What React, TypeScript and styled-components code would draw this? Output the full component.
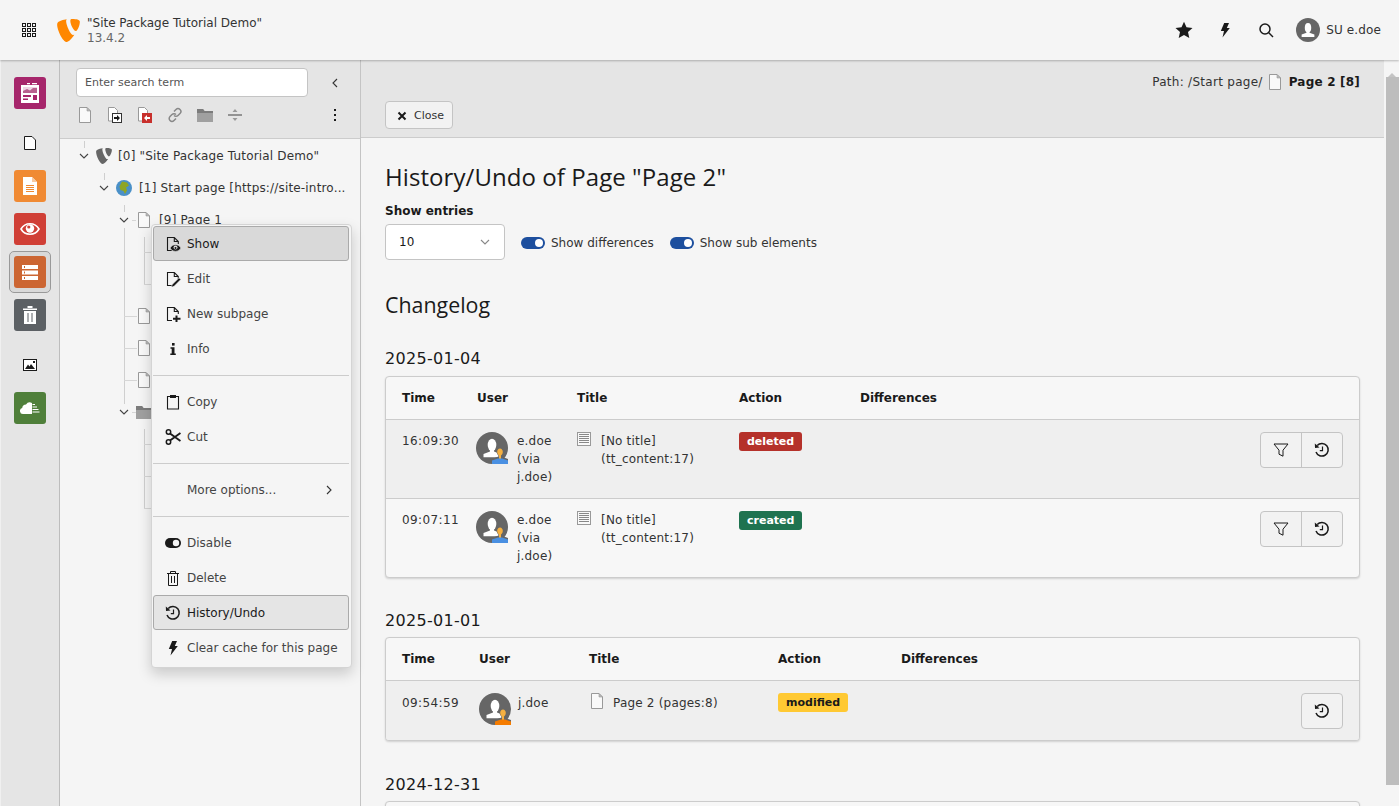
import React from "react";
import styled, { createGlobalStyle } from "styled-components";

const GlobalStyle = createGlobalStyle`
  html, body { margin: 0; padding: 0; height: 100%; overflow: hidden; }
  body { background: #f5f5f5; color: #1a1a1a; font: 12px/18px "DejaVu Sans", Verdana, sans-serif; }
  * { box-sizing: border-box; }
`;

const Page = styled.div`
  height: 806px;
  display: flex;
  flex-direction: column;
  position: relative;
  overflow: hidden;
`;

/* ---------- top bar ---------- */
const TopBar = styled.header`
  height: 60px;
  flex: none;
  display: flex;
  align-items: center;
  background: #f5f5f5;
  box-shadow: 0 1px 2px rgba(0, 0, 0, 0.25);
  position: relative;
  z-index: 3;
`;
const AppGrid = styled.div`
  width: 57px;
  display: flex;
  justify-content: center;
`;
const Logo = styled.div`
  width: 30px;
  height: 23px;
  display: flex;
`;
const SiteName = styled.div`
  font-size: 12px;
  line-height: 15px;
  color: #333;
  margin-top: 1px;
`;
const Version = styled.div`
  color: #666;
`;
const TopActions = styled.div`
  margin-left: auto;
  display: flex;
  align-items: center;
`;
const TopIcon = styled.div`
  width: 41px;
  display: flex;
  justify-content: center;
`;
const UserMenu = styled.div`
  display: flex;
  align-items: center;
  gap: 6px;
  margin: 0 18px 0 10px;
  color: #333;
  letter-spacing: 0.12px;
`;
const UserAvatar = styled.div`
  width: 24px;
  height: 24px;
  display: flex;
`;

const Body = styled.div`
  flex: 1;
  display: flex;
  min-height: 0;
`;

/* ---------- module menu ---------- */
const ModuleNav = styled.nav`
  width: 60px;
  flex: none;
  background: #e5e5e5;
  border-left: 1px solid #f0f0f0;
  border-right: 1px solid #bdbdbd;
  padding-top: 12px;
  display: flex;
  flex-direction: column;
  gap: 7px;
`;
const ModuleGroup = styled.div`
  display: flex;
  flex-direction: column;
`;
const ModuleItem = styled.div<{ $active?: boolean }>`
  width: 42px;
  margin-left: 8px;
  padding-top: ${(p) => (p.$active ? "4px" : "5px")};
  display: flex;
  justify-content: center;
  align-items: flex-start;
  border-radius: 5px;
  border: ${(p) => (p.$active ? "1px solid #999" : "none")};
  height: ${(p) => (p.$active ? "42px" : "43px")};
  margin-bottom: ${(p) => (p.$active ? "1px" : "0")};
  background: ${(p) => (p.$active ? "#d9d9d9" : "transparent")};
`;
const ModuleTile = styled.div<{ $bg: string }>`
  width: 32px;
  height: 32px;
  border-radius: 3px;
  background: ${(p) => p.$bg};
  display: flex;
  align-items: center;
  justify-content: center;
`;
const ModulePlain = styled.div`
  width: 32px;
  height: 32px;
  display: flex;
  align-items: center;
  justify-content: center;
`;

/* ---------- page tree ---------- */
const TreePanel = styled.aside`
  width: 301px;
  flex: none;
  border-right: 1px solid #c4c4c4;
  background: #f5f5f5;
  display: flex;
  flex-direction: column;
`;
const TreeToolbar = styled.div`
  height: 79px;
  flex: none;
  background: #e5e5e5;
  border-bottom: 1px solid #ccc;
  padding: 8px 16px 0;
`;
const SearchRow = styled.div`
  display: flex;
  align-items: center;
`;
const SearchBox = styled.div`
  width: 232px;
  height: 29px;
  background: #fff;
  border: 1px solid #c4c4c4;
  border-radius: 4px;
  padding: 0 8px;
  display: flex;
  align-items: center;
  font-size: 11px;
  color: #555;
`;
const CollapseBtn = styled.div`
  margin-left: 22px;
  display: flex;
`;
const ToolRow = styled.div`
  display: flex;
  align-items: center;
  margin-top: 9px;
  height: 18px;
`;
const ToolIcon = styled.div`
  width: 30px;
  display: flex;
  justify-content: center;
  &:first-child { width: 18px; margin-right: 6px; }
`;
const ToolMore = styled.div`
  margin-left: auto;
  margin-right: 7px;
  display: flex;
`;
const Tree = styled.div`
  flex: 1;
  position: relative;
  padding: 1px 0 0 4px;
`;
const TreeGroup = styled.div<{ $line: number }>`
  position: relative;
  margin-left: 20px;
  &::before {
    content: "";
    position: absolute;
    left: 0;
    top: 1px;
    width: 1px;
    height: ${(p) => p.$line}px;
    background: #cfcfcf;
  }
`;
const TreeRow = styled.div<{ $dash?: number }>`
  height: 32px;
  position: relative;
  display: flex;
  align-items: center;
  color: #333;
  white-space: nowrap;
  &::before {
    content: "";
    position: absolute;
    left: 0;
    top: 16px;
    height: 1px;
    width: ${(p) => p.$dash ?? 12}px;
    background: #d6d6d6;
  }
`;
const Chevron = styled.div`
  width: 16px;
  height: 16px;
  margin-left: -8px;
  margin-right: 4px;
  background: #f5f5f5;
  position: relative;
  display: flex;
  align-items: center;
  justify-content: center;
`;
const RowIcon = styled.div<{ $gap?: number; $left?: number }>`
  width: 16px;
  height: 16px;
  margin-left: ${(p) => p.$left ?? 0}px;
  margin-right: ${(p) => p.$gap ?? 6}px;
  display: flex;
  align-items: center;
  justify-content: center;
  flex: none;
`;
const RowLabel = styled.span`
  display: inline-block;
  letter-spacing: 0.17px;
`;

/* ---------- context menu ---------- */
const ContextMenu = styled.div`
  position: absolute;
  left: 151px;
  top: 224px;
  width: 201px;
  height: 444px;
  background: #f5f5f5;
  border: 1px solid #d4d4d4;
  border-radius: 4px;
  padding: 1px 2px 1px 1px;
  box-shadow: 0 6px 14px rgba(0, 0, 0, 0.18);
  z-index: 5;
`;
const MenuItem = styled.div<{ $state?: "focus" | "current" }>`
  height: 35px;
  display: flex;
  align-items: center;
  gap: 6px;
  border-radius: 3px;
  color: ${(p) => (p.$state ? "#1a1a1a" : "#444")};
  border: 1px solid ${(p) => (p.$state ? "#aaa" : "transparent")};
  padding-left: 11px;
  background: ${(p) => (p.$state === "focus" ? "#d9d9d9" : p.$state === "current" ? "#e5e5e5" : "transparent")};
`;
const MenuIcon = styled.span`
  width: 16px;
  height: 16px;
  flex: none;
  display: flex;
`;
const MenuArrow = styled.span`
  margin-left: auto;
  margin-right: 14px;
  display: flex;
`;
const MenuDivider = styled.div`
  height: 1px;
  background: #ccc;
  margin: 8.5px 0;
`;

/* ---------- content ---------- */
const ContentArea = styled.main`
  flex: 1;
  min-width: 0;
  display: flex;
`;
const ContentColumn = styled.div`
  flex: 1;
  min-width: 0;
  display: flex;
  flex-direction: column;
`;
const DocHeader = styled.div`
  height: 78px;
  flex: none;
  background: #e5e5e5;
  border-bottom: 1px solid #ccc;
  padding: 12px 24px 0;
  display: flex;
  flex-direction: column;
`;
const PathLine = styled.div`
  align-self: flex-end;
  display: flex;
  align-items: center;
  height: 20px;
  color: #333;
  letter-spacing: 0.28px;
`;
const PathIcon = styled.span`
  margin: 0 6px 0 4px;
  display: flex;
`;
const PathPage = styled.strong`
  color: #1a1a1a;
  letter-spacing: 0.2px;
`;
const CloseButton = styled.div`
  margin-top: 9px;
  align-self: flex-start;
  height: 28px;
  width: 68px;
  background: #f2f2f2;
  border: 1px solid #c4c4c4;
  border-radius: 4px;
  display: flex;
  align-items: center;
  padding: 1px 0 0 11px;
  gap: 7px;
  font-size: 11px;
  color: #333;
`;
const ContentBody = styled.div`
  flex: 1;
  min-height: 0;
  overflow: hidden;
  padding: 24px 24px 0;
`;
const PageTitle = styled.h1`
  font: 400 24px/30px "Open Sans", sans-serif;
  letter-spacing: 0.07px;
  color: #1a1a1a;
  margin: 0;
`;
const FieldLabel = styled.div`
  font-weight: 700;
  margin-top: 10px;
  height: 18px;
  line-height: 18px;
`;
const FilterRow = styled.div`
  display: flex;
  align-items: center;
  margin-top: 4px;
`;
const SelectBox = styled.div`
  width: 120px;
  height: 36px;
  background: #fff;
  border: 1px solid #c4c4c4;
  border-radius: 4px;
  padding: 0 14px 0 13px;
  display: flex;
  align-items: center;
  justify-content: space-between;
`;
const ToggleWrap = styled.label`
  display: flex;
  align-items: center;
  gap: 6px;
  margin: 2px 0 0 16px;
  color: #333;
`;
const Toggle = styled.span`
  width: 24px;
  height: 12px;
  border-radius: 6px;
  background: #1d4f9e;
  position: relative;
  &::after {
    content: "";
    position: absolute;
    right: 2px;
    top: 2px;
    width: 8px;
    height: 8px;
    border-radius: 50%;
    background: #fff;
  }
`;
const SectionTitle = styled.h2`
  font: 400 21.4px/26px "Open Sans", sans-serif;
  color: #1a1a1a;
  margin: 32px 0 0;
`;
const DateTitle = styled.h3<{ $top: number; $bottom: number }>`
  font: 400 16px/20px "DejaVu Sans", Verdana, sans-serif;
  letter-spacing: 0.3px;
  color: #1a1a1a;
  margin: ${(p) => p.$top}px 0 ${(p) => p.$bottom}px;
`;
const Panel = styled.div`
  width: 975px;
  min-height: 60px;
  border: 1px solid #ccc;
  border-radius: 4px;
  background: #f7f7f7;
  box-shadow: 0 1px 2px rgba(0, 0, 0, 0.15);
  overflow: hidden;
`;
const Row = styled.div<{ $cols: string; $alt?: boolean; $height: number; $head?: boolean }>`
  display: grid;
  grid-template-columns: ${(p) => p.$cols};
  height: ${(p) => p.$height}px;
  padding: ${(p) => (p.$head ? "0" : "12px")} 16px 0;
  align-items: ${(p) => (p.$head ? "center" : "start")};
  background: ${(p) => (p.$alt ? "#efefef" : "transparent")};
  border-top: ${(p) => (p.$head ? "none" : "1px solid #ccc")};
  color: #333;
  font-weight: ${(p) => (p.$head ? 700 : 400)};
  & > * { color: ${(p) => (p.$head ? "#1a1a1a" : "inherit")}; }
`;
const TimeCell = styled.span<{ $nudge?: number }>`
  letter-spacing: 0.4px;
  padding-top: ${(p) => p.$nudge ?? 0}px;
`;
const UserCell = styled.div<{ $gap: number; $left?: number }>`
  display: flex;
  gap: ${(p) => p.$gap}px;
  margin-left: ${(p) => p.$left ?? -1}px;
`;
const CellText = styled.span<{ $nudge?: number }>`
  letter-spacing: 0.2px;
  padding-top: ${(p) => p.$nudge ?? 0}px;
`;
const Avatar = styled.div`
  width: 32px;
  height: 32px;
  flex: none;
  display: flex;
`;
const TitleCell = styled.div<{ $gap: number }>`
  display: flex;
  gap: ${(p) => p.$gap}px;
`;
const TitleIcon = styled.div`
  width: 16px;
  height: 16px;
  flex: none;
  display: flex;
`;
const Badge = styled.span<{ $bg: string; $fg: string }>`
  display: inline-block;
  height: 19px;
  line-height: 20px;
  border-radius: 3px;
  padding: 0 8px;
  font-size: 11px;
  font-weight: 700;
  background: ${(p) => p.$bg};
  color: ${(p) => p.$fg};
`;
const BtnGroup = styled.div`
  justify-self: end;
  display: flex;
  border: 1px solid #c4c4c4;
  border-radius: 4px;
  background: #f2f2f2;
  height: 36px;
`;
const GroupBtn = styled.div`
  width: 40px;
  display: flex;
  align-items: center;
  justify-content: center;
  & + & { border-left: 1px solid #c4c4c4; width: 41px; }
`;
const Scrollbar = styled.div`
  width: 15px;
  flex: none;
  background: #f5f5f5;
  display: flex;
  flex-direction: column;
  align-items: stretch;
`;
const ScrollArrow = styled.div`
  height: 17px;
  display: flex;
  justify-content: center;
  padding-top: 7px;
  &::before {
    content: "";
    border-left: 4px solid transparent;
    border-right: 4px solid transparent;
    border-bottom: 4px solid #c4c4c4;
  }
`;
const ScrollThumb = styled.div`
  height: 708px;
  margin-left: 2px;
  background: #bdbdbd;
`;

/* ---------- icons ---------- */
const Doc = ({ size = 16, stroke = "#999" }: { size?: number; stroke?: string }) => (
  <svg width={size} height={size} viewBox="0 0 16 16">
    <path d="M2.5.5h7.500l3.500 3.500v11.500h-11z" fill="#f9f9f9" stroke={stroke} />
    <path d="M10 .5v3.500h3.500z" fill="#bbb" stroke={stroke} strokeWidth="0.6" />
  </svg>
);
const Chev = ({ dir = "down", color = "#444" }: { dir?: "down" | "left" | "right"; color?: string }) => (
  <svg width="10" height="10" viewBox="0 0 10 10" fill="none" stroke={color} strokeWidth="1.1">
    {dir === "down" && <path d="M1 3l4 4 4-4" />}
    {dir === "left" && <path d="M7 1L3 5l4 4" />}
    {dir === "right" && <path d="M3 1l4 4-4 4" />}
  </svg>
);
const Typo3Logo = ({ color, size }: { color: string; size: number }) => (
  <svg width={size} height={size} viewBox="0 0 24 24">
    <path
      fill={color}
      d="M18.08 16.539c-.356.105-.64.144-1.012.144-3.048 0-7.524-10.652-7.524-14.197 0-1.305.31-1.74.745-2.114C6.56.808 2.082 2.177.651 3.924c-.31.436-.497 1.12-.497 1.99C.154 11.447 6.06 24 10.228 24c1.928 0 5.178-3.17 7.852-7.461M16.134 0c3.855 0 7.712.622 7.712 2.798 0 4.415-2.8 9.765-4.23 9.765-2.549 0-5.72-7.09-5.72-10.635C13.897.31 14.518 0 16.134 0"
    />
  </svg>
);
const Bolt = ({ size = 16 }: { size?: number }) => (
  <svg width={size} height={size} viewBox="0 0 16 16">
    <path fill="#1a1a1a" d="M7.200 1h4.800L9.800 6h3L5.500 15.500 7 9H3.800z" />
  </svg>
);
const HistoryIcon = () => (
  <svg width="16" height="16" viewBox="0 0 16 16" fill="none" stroke="#1a1a1a" strokeWidth="1.5">
    <path d="M3.200 3.600A6.300 6.300 0 1 1 2 10" />
    <path d="M.8 1.500l.2 4.500 4.500-.4z" fill="#1a1a1a" stroke="none" />
    <path d="M8.500 4.500v4.200H5.800" strokeWidth="1.200" />
  </svg>
);
const FilterIcon = () => (
  <svg width="16" height="16" viewBox="0 0 16 16" fill="none" stroke="#1a1a1a">
    <path d="M1 2h14L10 8.200v6l-4-2V8.200z" strokeLinejoin="round" />
  </svg>
);
const PersonAvatar = ({ size, badge }: { size: number; badge?: string }) => (
  <svg width={size} height={size} viewBox="0 0 32 32">
    <circle cx="16" cy="16" r="16" fill="#666" />
    <ellipse cx="16" cy="13" rx="4.300" ry="6.300" fill="#fff" />
    <path d="M14 18h4v1.500l6.500 2.500v3.200H7.500V22l6.500-2.500z" fill="#fff" />
    {badge && (
      <>
        <path d="M24 16c2 0 3.300 1.500 3.300 3.600 0 1.700-.8 3.100-1.800 3.800v1.200l6.500 2.400V32H16v-5l6.400-2.400v-1.200c-1-.7-1.800-2.100-1.800-3.800 0-2.100 1.400-3.600 3.400-3.600z" fill="#666" />
        <path d="M24 16.500c1.600 0 2.800 1.300 2.800 3.300 0 1.600-.7 3-1.800 3.600V27h-2v-3.600c-1.100-.6-1.800-2-1.800-3.600 0-2 1.200-3.300 2.800-3.300z" fill="#f5b041" />
        <path d="M16 32v-3.500l6-1.900h4l6 1.900V32z" fill={badge} />
      </>
    )}
  </svg>
);
const ContentIcon = () => (
  <svg width="14" height="14" viewBox="0 0 14 14">
    <rect x="0.5" y="0.5" width="13" height="13" fill="#f9f9f9" stroke="#999" />
    <path d="M2 2.500h10M2 4.500h10M2 6.500h10M2 8.500h10M2 10.500h10" stroke="#888" />
  </svg>
);
const OutlineDoc = ({ children }: { children?: React.ReactNode }) => (
  <svg width="16" height="16" viewBox="0 0 16 16">
    <path d="M7 14.500H2.500V1.500h6.800l4 4V8M9.300 1.500v4h4" fill="none" stroke="#1a1a1a" strokeWidth="1.100" />
    {children}
  </svg>
);

const menuIcons = {
  show: (
    <OutlineDoc>
      <path d="M5 12c2-4.500 9-4.500 11 0-2 4.500-9 4.500-11 0z" fill="#1a1a1a" stroke="#d9d9d9" strokeWidth="0.800" />
      <circle cx="10.500" cy="11.500" r="2" fill="#d9d9d9" />
      <circle cx="10.500" cy="12" r="1" fill="#1a1a1a" />
    </OutlineDoc>
  ),
  edit: (
    <OutlineDoc>
      <path d="M14 6.800l1.800 1.800-6.700 6.700-2.900 1 1-2.800z" fill="#1a1a1a" stroke="#f5f5f5" strokeWidth="0.600" />
    </OutlineDoc>
  ),
  add: (
    <OutlineDoc>
      <rect x="6.500" y="9" width="9.500" height="7" fill="#f5f5f5" />
      <path d="M11.500 9.500v6.500M8 12.800h7.500" stroke="#1a1a1a" strokeWidth="2" />
      <path d="M2.500 14.500H7" stroke="#1a1a1a" />
    </OutlineDoc>
  ),
  info: (
    <svg width="16" height="16" viewBox="0 0 16 16">
      <rect x="7" y="2" width="2.600" height="2.600" fill="#1a1a1a" />
      <path d="M5.500 6.300h4v6.200h1.300v1.500H5.300v-1.500h1.400V7.800H5.500z" fill="#1a1a1a" />
    </svg>
  ),
  copy: (
    <svg width="16" height="16" viewBox="0 0 16 16" fill="none" stroke="#1a1a1a" strokeWidth="1.100">
      <path d="M5 2.500H2.500v12.500h11V2.500H11" />
      <rect x="5" y="1" width="6" height="3" fill="#1a1a1a" stroke="none" />
    </svg>
  ),
  cut: (
    <svg width="16" height="16" viewBox="0 0 16 16" fill="none" stroke="#1a1a1a" strokeWidth="1.500">
      <circle cx="3.500" cy="3" r="2.200" />
      <circle cx="3.500" cy="13" r="2.200" />
      <path d="M5 4.500l10.500 7.500M5 11.500l10.500-7.500" strokeWidth="2" />
    </svg>
  ),
  disable: (
    <svg width="16" height="16" viewBox="0 0 16 16">
      <rect x="0" y="3" width="16" height="10" rx="5" fill="#1a1a1a" />
      <circle cx="11" cy="8" r="3.200" fill="#f5f5f5" />
    </svg>
  ),
  trash: (
    <svg width="16" height="16" viewBox="0 0 16 16" fill="none" stroke="#1a1a1a">
      <path d="M2 3.500h12M5.500 3.500v-2h5v2M3.500 3.500V15.500h9V3.500M6.500 6v7M9.500 6v7" />
    </svg>
  ),
};

const moduleIcons = {
  layout: (
    <svg width="18" height="20" viewBox="0 0 18 20">
      <path d="M0 2h18v18H0z" fill="#fff" />
      <path d="M6 0h3v1.200H6zM11 0h5v1.200h-5z" fill="#fff" />
      <path d="M2 4h14v6H2z" fill="#efd5e4" />
      <path d="M2 10V8l4-2 3 1.500L12 5h4v5z" fill="#b8608f" />
      <path d="M2 12h8v2H2zM12 12h4v5h-4zM2 15.500h5v1.500H2z" fill="#a6266b" />
    </svg>
  ),
  page: (
    <svg width="14" height="18" viewBox="0 0 14 18">
      <path d="M0 0h9l5 5v13H0z" fill="#fff" />
      <path d="M9 0v5h5z" fill="#f8c9a0" />
      <path d="M3 8.500h8M3 10.500h8M3 12.500h8M3 14.500h8" stroke="#f08a33" />
    </svg>
  ),
  eye: (
    <svg width="20" height="14" viewBox="0 0 20 14">
      <path d="M1 7c4-7 14-7 18 0-4 7-14 7-18 0z" fill="none" stroke="#fff" strokeWidth="1.600" />
      <circle cx="10" cy="6.500" r="4.200" fill="#fff" />
      <circle cx="8.800" cy="5" r="1.600" fill="#d03f36" />
    </svg>
  ),
  list: (
    <svg width="16" height="15" viewBox="0 0 16 15">
      <path d="M0 0h16v4H0zM0 5.500h16v4H0zM0 11h16v4H0z" fill="#fff" />
      <path d="M2.500 1v2M2.500 6.500v2M2.500 12v2" stroke="#cc6633" />
    </svg>
  ),
  trash: (
    <svg width="14" height="18" viewBox="0 0 14 18">
      <path d="M0 2.500h14v1.500H0zM4.500 0h5v2h-5z" fill="#fff" />
      <path d="M1 5h12v13H1z" fill="#fff" />
      <path d="M5 7v9M9 7v9" stroke="#5c6064" />
    </svg>
  ),
  image: (
    <svg width="14" height="12" viewBox="0 0 14 12">
      <rect x="0.500" y="0.500" width="13" height="11" fill="#fff" stroke="#1a1a1a" />
      <path d="M2 10l3-4.500 1.500 2L8 5l4 5z" fill="#1a1a1a" />
      <rect x="10" y="2" width="2" height="2" fill="#1a1a1a" />
    </svg>
  ),
  cloud: (
    <svg width="20" height="12" viewBox="0 0 20 12">
      <path d="M3 12a3 3 0 0 1-.8-5.900A4 4 0 0 1 6 2.500 4.500 4.500 0 0 1 12 1v11z" fill="#fff" />
      <path d="M12.500 2.500h2.500M12.500 5h4.500M12.500 7.500h6M12.500 10h7" stroke="#fff" />
    </svg>
  ),
};

const FolderIcon = () => (
  <svg width="16" height="14" viewBox="0 0 16 14">
    <path d="M0 1h6l1.500 2H16v11H0z" fill="#a0a0a0" />
    <path d="M0 1h6l1.500 2H16v2H0z" fill="#7c7c7c" />
  </svg>
);

const COLS_A = "75px 100px 162px 121px 1fr auto";
const COLS_B = "77px 110px 189px 123px 1fr auto";

const ChangeRow = ({ time, alt, badge }: { time: string; alt?: boolean; badge: React.ReactNode }) => (
  <Row $cols={COLS_A} $alt={alt} $height={79}>
    <TimeCell>{time}</TimeCell>
    <UserCell $gap={9}>
      <Avatar>
        <PersonAvatar size={32} badge="#4a90e2" />
      </Avatar>
      <CellText>
        e.doe
        <br />
        (via
        <br />
        j.doe)
      </CellText>
    </UserCell>
    <TitleCell $gap={8}>
      <TitleIcon>
        <ContentIcon />
      </TitleIcon>
      <CellText>
        [No title]
        <br />
        (tt_content:17)
      </CellText>
    </TitleCell>
    <div>{badge}</div>
    <span />
    <BtnGroup>
      <GroupBtn>
        <FilterIcon />
      </GroupBtn>
      <GroupBtn>
        <HistoryIcon />
      </GroupBtn>
    </BtnGroup>
  </Row>
);

const HeadRow = ({ cols }: { cols: string }) => (
  <Row $cols={cols} $height={42} $head>
    <span>Time</span>
    <span>User</span>
    <span>Title</span>
    <span>Action</span>
    <span>Differences</span>
    <span />
  </Row>
);

export default function App() {
  return (
    <Page>
      <GlobalStyle />
      <TopBar>
        <AppGrid>
          <svg width="14" height="14" viewBox="0 0 14 14" fill="none" stroke="#1a1a1a">
            {[0, 5, 10].map((y) =>
              [0, 5, 10].map((x) => <rect key={`${x}-${y}`} x={x + 0.5} y={y + 0.5} width="3" height="3" />)
            )}
          </svg>
        </AppGrid>
        <Logo>
          <Typo3Logo color="#ff8700" size={23} />
        </Logo>
        <SiteName>
          "Site Package Tutorial Demo"
          <Version>13.4.2</Version>
        </SiteName>
        <TopActions>
          <TopIcon>
            <svg width="18" height="18" viewBox="0 0 18 18">
              <path fill="#1a1a1a" d="M9 .8l2.500 5.500 6 .7-4.500 4 1.300 6L9 14l-5.300 3 1.300-6-4.500-4 6-.7z" />
            </svg>
          </TopIcon>
          <TopIcon>
            <Bolt />
          </TopIcon>
          <TopIcon>
            <svg width="16" height="16" viewBox="0 0 16 16" fill="none" stroke="#1a1a1a" strokeWidth="1.500">
              <circle cx="7" cy="7" r="5" />
              <path d="M10.800 10.800L15 15" />
            </svg>
          </TopIcon>
          <UserMenu>
            <UserAvatar>
              <PersonAvatar size={24} />
            </UserAvatar>
            SU e.doe
          </UserMenu>
        </TopActions>
      </TopBar>

      <Body>
        <ModuleNav>
          <ModuleGroup>
            <ModuleItem>
              <ModuleTile $bg="#a6266b">{moduleIcons.layout}</ModuleTile>
            </ModuleItem>
          </ModuleGroup>
          <ModuleGroup>
            <ModuleItem>
              <ModulePlain>
                <svg width="16" height="16" viewBox="0 0 16 16" fill="#fff" stroke="#1a1a1a">
                  <path d="M2.500 1.500h7.500l3.500 3.500v9.500h-11z" />
                </svg>
              </ModulePlain>
            </ModuleItem>
            <ModuleItem>
              <ModuleTile $bg="#f08a33">{moduleIcons.page}</ModuleTile>
            </ModuleItem>
            <ModuleItem>
              <ModuleTile $bg="#d03f36">{moduleIcons.eye}</ModuleTile>
            </ModuleItem>
            <ModuleItem $active>
              <ModuleTile $bg="#cc6633">{moduleIcons.list}</ModuleTile>
            </ModuleItem>
            <ModuleItem>
              <ModuleTile $bg="#5c6064">{moduleIcons.trash}</ModuleTile>
            </ModuleItem>
          </ModuleGroup>
          <ModuleGroup>
            <ModuleItem>
              <ModulePlain>{moduleIcons.image}</ModulePlain>
            </ModuleItem>
            <ModuleItem>
              <ModuleTile $bg="#4f7f3a">{moduleIcons.cloud}</ModuleTile>
            </ModuleItem>
          </ModuleGroup>
        </ModuleNav>

        <TreePanel>
          <TreeToolbar>
            <SearchRow>
              <SearchBox>Enter search term</SearchBox>
              <CollapseBtn>
                <Chev dir="left" color="#333" />
              </CollapseBtn>
            </SearchRow>
            <ToolRow>
              <ToolIcon>
                <Doc />
              </ToolIcon>
              <ToolIcon>
                <svg width="16" height="16" viewBox="0 0 16 16">
                  <path d="M1.500.5h6l3 3V14h-9z" fill="#fff" stroke="#999" />
                  <rect x="5.500" y="6.500" width="9" height="9" fill="#fff" stroke="#333" />
                  <path d="M7 12v-2h3V8l3 3-3 3v-2z" fill="#1a1a1a" />
                </svg>
              </ToolIcon>
              <ToolIcon>
                <svg width="16" height="16" viewBox="0 0 16 16">
                  <path d="M1.500.5h6l3 3V14h-9z" fill="#fff" stroke="#999" />
                  <rect x="5" y="6" width="10" height="10" fill="#c8302c" />
                  <path d="M13 10v2h-3v2l-3-3 3-3v2z" fill="#fff" />
                </svg>
              </ToolIcon>
              <ToolIcon>
                <svg width="16" height="16" viewBox="0 0 16 16" fill="none" stroke="#888" strokeWidth="1.500">
                  <path d="M7 4.500l2-2a2.800 2.800 0 0 1 4 4l-2 2a2.800 2.800 0 0 1-4 0" />
                  <path d="M9 11.500l-2 2a2.800 2.800 0 0 1-4-4l2-2a2.800 2.800 0 0 1 4 0" />
                </svg>
              </ToolIcon>
              <ToolIcon>
                <FolderIcon />
              </ToolIcon>
              <ToolIcon>
                <svg width="16" height="16" viewBox="0 0 16 16">
                  <path d="M1 8h14" stroke="#777" strokeWidth="1.500" />
                  <path d="M5.500 5L8 2l2.500 3zM5.500 11L8 14l2.500-3z" fill="#999" />
                </svg>
              </ToolIcon>
              <ToolMore>
                <svg width="4" height="14" viewBox="0 0 4 14" fill="#1a1a1a">
                  <rect x="1" y="1" width="2" height="2" />
                  <rect x="1" y="6" width="2" height="2" />
                  <rect x="1" y="11" width="2" height="2" />
                </svg>
              </ToolMore>
            </ToolRow>
          </TreeToolbar>

          <Tree>
            <TreeGroup $line={8}>
              <TreeRow $dash={8}>
                <Chevron>
                  <Chev />
                </Chevron>
                <RowIcon $gap={6}>
                  <Typo3Logo color="#666" size={16} />
                </RowIcon>
                <RowLabel>[0] "Site Package Tutorial Demo"</RowLabel>
              </TreeRow>
              <TreeGroup $line={8}>
                <TreeRow $dash={8}>
                  <Chevron>
                    <Chev />
                  </Chevron>
                  <RowIcon $gap={7}>
                    <svg width="16" height="16" viewBox="0 0 16 16">
                      <circle cx="8" cy="8" r="8" fill="#4a90c8" />
                      <path d="M6 1.500l5 1 2 3-3 2 1 3-2 3.500-1.500-3-3-1-1-3.500z" fill="#8ea525" />
                    </svg>
                  </RowIcon>
                  <RowLabel>[1] Start page [https://site-intro...</RowLabel>
                </TreeRow>
                <TreeGroup $line={200}>
                  <TreeRow $dash={12}>
                    <Chevron>
                      <Chev />
                    </Chevron>
                    <RowIcon $gap={7}>
                      <Doc />
                    </RowIcon>
                    <RowLabel>[9] Page 1</RowLabel>
                  </TreeRow>
                  <TreeGroup $line={48}>
                    <TreeRow $dash={8} />
                    <TreeRow $dash={8} />
                  </TreeGroup>
                  <TreeRow $dash={13}>
                    <RowIcon $left={12}>
                      <Doc />
                    </RowIcon>
                  </TreeRow>
                  <TreeRow $dash={13}>
                    <RowIcon $left={12}>
                      <Doc />
                    </RowIcon>
                  </TreeRow>
                  <TreeRow $dash={13}>
                    <RowIcon $left={12}>
                      <Doc />
                    </RowIcon>
                  </TreeRow>
                  <TreeRow $dash={12}>
                    <Chevron>
                      <Chev />
                    </Chevron>
                    <RowIcon>
                      <FolderIcon />
                    </RowIcon>
                  </TreeRow>
                  <TreeGroup $line={80}>
                    <TreeRow $dash={8} />
                    <TreeRow $dash={8} />
                    <TreeRow $dash={8} />
                  </TreeGroup>
                </TreeGroup>
              </TreeGroup>
            </TreeGroup>
          </Tree>
        </TreePanel>

        <ContentArea>
          <ContentColumn>
            <DocHeader>
              <PathLine>
                Path: /Start page/
                <PathIcon>
                  <Doc />
                </PathIcon>
                <PathPage>Page 2 [8]</PathPage>
              </PathLine>
              <CloseButton>
                <svg width="10" height="10" viewBox="0 0 10 10" stroke="#1a1a1a" strokeWidth="2">
                  <path d="M1.500 1.500l7 7M8.500 1.500l-7 7" />
                </svg>
                Close
              </CloseButton>
            </DocHeader>
            <ContentBody>
              <PageTitle>History/Undo of Page "Page 2"</PageTitle>
              <FieldLabel>Show entries</FieldLabel>
              <FilterRow>
                <SelectBox>
                  10
                  <Chev color="#888" />
                </SelectBox>
                <ToggleWrap>
                  <Toggle />
                  Show differences
                </ToggleWrap>
                <ToggleWrap>
                  <Toggle />
                  Show sub elements
                </ToggleWrap>
              </FilterRow>
              <SectionTitle>Changelog</SectionTitle>

              <DateTitle $top={31} $bottom={7}>
                2025-01-04
              </DateTitle>
              <Panel>
                <HeadRow cols={COLS_A} />
                <ChangeRow
                  time="16:09:30"
                  alt
                  badge={
                    <Badge $bg="#b5312a" $fg="#fff">
                      deleted
                    </Badge>
                  }
                />
                <ChangeRow
                  time="09:07:11"
                  badge={
                    <Badge $bg="#1f7350" $fg="#fff">
                      created
                    </Badge>
                  }
                />
              </Panel>

              <DateTitle $top={33} $bottom={6}>
                2025-01-01
              </DateTitle>
              <Panel>
                <HeadRow cols={COLS_B} />
                <Row $cols={COLS_B} $alt $height={60}>
                  <TimeCell $nudge={1}>09:54:59</TimeCell>
                  <UserCell $gap={7} $left={0}>
                    <Avatar>
                      <PersonAvatar size={32} badge="#f57c00" />
                    </Avatar>
                    <CellText $nudge={1}>j.doe</CellText>
                  </UserCell>
                  <TitleCell $gap={8}>
                    <TitleIcon>
                      <Doc />
                    </TitleIcon>
                    <CellText $nudge={1}>Page 2 (pages:8)</CellText>
                  </TitleCell>
                  <div>
                    <Badge $bg="#ffc933" $fg="#1a1a1a">
                      modified
                    </Badge>
                  </div>
                  <span />
                  <BtnGroup>
                    <GroupBtn>
                      <HistoryIcon />
                    </GroupBtn>
                  </BtnGroup>
                </Row>
              </Panel>

              <DateTitle $top={34} $bottom={6}>
                2024-12-31
              </DateTitle>
              <Panel />
            </ContentBody>
          </ContentColumn>
          <Scrollbar>
            <ScrollArrow />
            <ScrollThumb />
          </Scrollbar>
        </ContentArea>
      </Body>

      <ContextMenu>
        <MenuItem $state="focus">
          <MenuIcon>{menuIcons.show}</MenuIcon>
          Show
        </MenuItem>
        <MenuItem>
          <MenuIcon>{menuIcons.edit}</MenuIcon>
          Edit
        </MenuItem>
        <MenuItem>
          <MenuIcon>{menuIcons.add}</MenuIcon>
          New subpage
        </MenuItem>
        <MenuItem>
          <MenuIcon>{menuIcons.info}</MenuIcon>
          Info
        </MenuItem>
        <MenuDivider />
        <MenuItem>
          <MenuIcon>{menuIcons.copy}</MenuIcon>
          Copy
        </MenuItem>
        <MenuItem>
          <MenuIcon>{menuIcons.cut}</MenuIcon>
          Cut
        </MenuItem>
        <MenuDivider />
        <MenuItem>
          <MenuIcon />
          More options...
          <MenuArrow>
            <Chev dir="right" color="#333" />
          </MenuArrow>
        </MenuItem>
        <MenuDivider />
        <MenuItem>
          <MenuIcon>{menuIcons.disable}</MenuIcon>
          Disable
        </MenuItem>
        <MenuItem>
          <MenuIcon>{menuIcons.trash}</MenuIcon>
          Delete
        </MenuItem>
        <MenuItem $state="current">
          <MenuIcon>
            <HistoryIcon />
          </MenuIcon>
          History/Undo
        </MenuItem>
        <MenuItem>
          <MenuIcon>
            <Bolt />
          </MenuIcon>
          Clear cache for this page
        </MenuItem>
      </ContextMenu>
    </Page>
  );
}
